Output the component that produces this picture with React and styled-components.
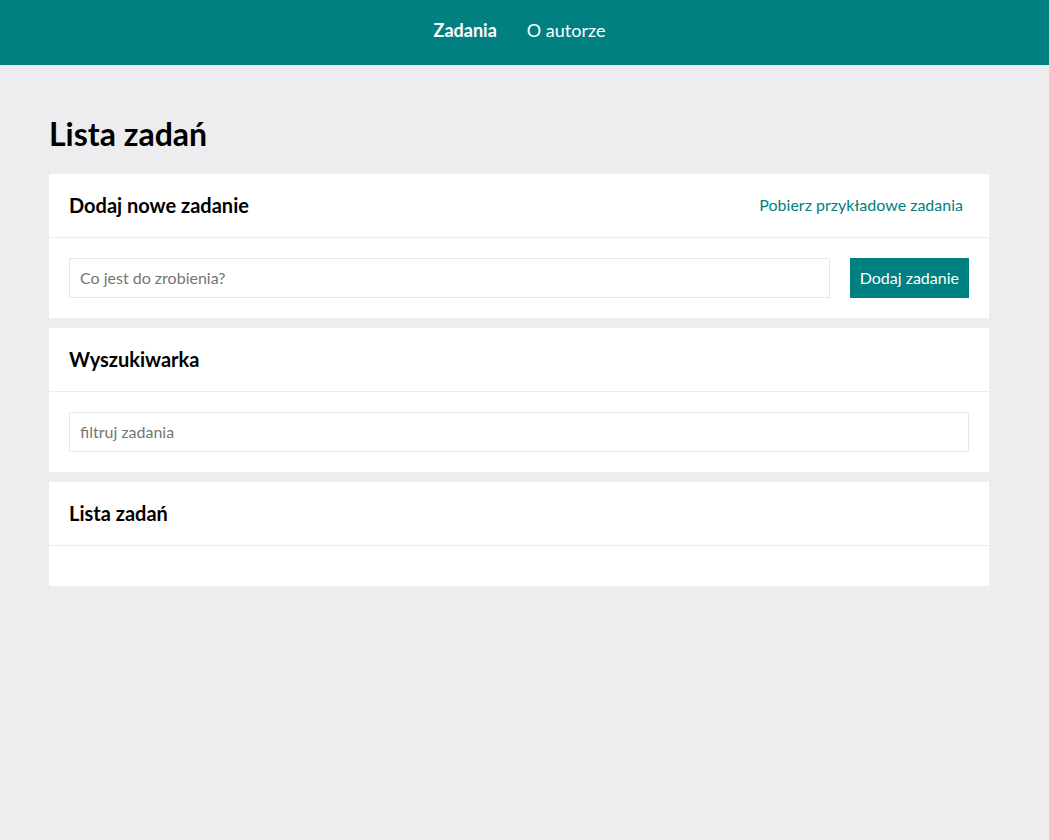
import React from 'react'
import styled, { createGlobalStyle } from 'styled-components'

const TEAL = '#008080'

const App = () => {
    return (
        <>
            <GlobalStyle />
            <Nav>
                <NavLink $active href='#'>Zadania</NavLink>
                <NavLink href='#'>O autorze</NavLink>
            </Nav>

            <Page>
                <Main>
                    <PageTitle>Lista zadań</PageTitle>

                    <Card>
                        <CardHeader>
                            <CardTitle>Dodaj nowe zadanie</CardTitle>
                            <TextLink href='#'>Pobierz przykładowe zadania</TextLink>
                        </CardHeader>
                        <CardBody>
                            <Input placeholder='Co jest do zrobienia?' />
                            <Button>Dodaj zadanie</Button>
                        </CardBody>
                    </Card>

                    <Card>
                        <CardHeader>
                            <CardTitle>Wyszukiwarka</CardTitle>
                        </CardHeader>
                        <CardBody>
                            <Input placeholder='filtruj zadania' />
                        </CardBody>
                    </Card>

                    <Card>
                        <CardHeader>
                            <CardTitle>Lista zadań</CardTitle>
                        </CardHeader>
                        <CardBody />
                    </Card>
                </Main>
            </Page>
        </>
    )
}

export default App


//GLOBAL
const GlobalStyle = createGlobalStyle`
    * { box-sizing: border-box; }
    body {
        margin: 0;
        background: #ededef;
        font-family: Lato, "Open Sans", sans-serif;
        color: #000;
    }
`;


//NAV BAR
const Nav = styled.nav`
    height: 65px;
    background: ${TEAL};
    display: flex;
    justify-content: center;
    align-items: center;
    gap: 30px;
    padding: 0 10px 5px 0;
`;

const NavLink = styled.a`
    color: #fff;
    text-decoration: none;
    font-size: 18px;
    font-weight: ${p => (p.$active ? 700 : 400)};
`;


//PAGE + MAIN CONTAINER
const Page = styled.div`
    padding-right: 11px;
`;

const Main = styled.main`
    width: 940px;
    margin: 0 auto;
    padding-top: 49px;
    display: flex;
    flex-direction: column;
    gap: 10px;
`;

const PageTitle = styled.h1`
    margin: 0 0 11px;
    font-size: 32px;
    font-weight: 700;
    line-height: 39px;
`;


//CARD
const Card = styled.section`
    background: #fff;
`;

const CardHeader = styled.div`
    height: 64px;
    padding: 0 26px 2px 20px;
    display: flex;
    align-items: center;
    justify-content: space-between;
    border-bottom: 1px solid #ececec;
`;

const CardTitle = styled.h2`
    margin: 0;
    font-size: 20px;
    font-weight: 700;
`;

const TextLink = styled.a`
    color: ${TEAL};
    text-decoration: none;
    font-size: 16px;
`;

const CardBody = styled.div`
    padding: 20px;
    display: flex;
    gap: 20px;
    min-height: 40px;
`;

const Input = styled.input`
    flex: 1;
    height: 40px;
    border: 1px solid #e8e8e8;
    padding: 0 10px 2px;
    font-family: inherit;
    font-size: 16px;
    outline: none;
    &::placeholder { color: #757575; }
`;

const Button = styled.button`
    height: 40px;
    padding: 0 10px 2px;
    border: none;
    background: ${TEAL};
    color: #fff;
    font-family: inherit;
    font-size: 16px;
    cursor: pointer;
`;
